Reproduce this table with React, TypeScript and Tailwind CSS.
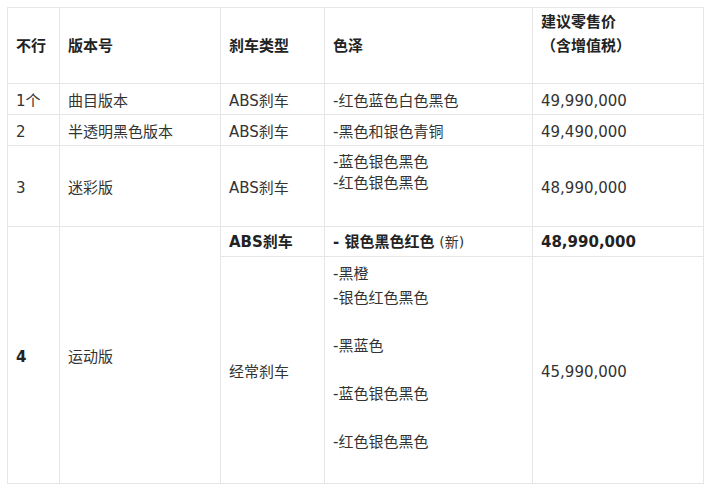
import React from 'react';

const FONT = '"DejaVu Sans", "Noto Sans CJK SC", sans-serif';

const cell = 'border border-[#e6e6e6] px-2 align-middle';
// body rows sit a couple of pixels low in the original
const body = `${cell} pt-1`;

export default function App() {
  return (
    <div className="min-h-[495px] w-[715px] bg-white pl-[7px] pt-[7px] text-[15px] leading-6 text-[#333]" style={{ fontFamily: FONT }}>
      <table className="table-fixed border-collapse">
        <colgroup>
          <col className="w-[52px]" />
          <col className="w-[161px]" />
          <col className="w-[104px]" />
          <col className="w-[208px]" />
          <col className="w-[171px]" />
        </colgroup>
        <tbody>
          <tr className="h-[76px] font-bold text-[#222]">
            <td className={cell}>不行</td>
            <td className={cell}>版本号</td>
            <td className={cell}>刹车类型</td>
            <td className={cell}>色泽</td>
            <td className={cell}>
              <div>建议零售价</div>
              <div>（含增值税）</div>
              <div>&nbsp;</div>
            </td>
          </tr>
          <tr className="h-[31px]">
            <td className={body}>1个</td>
            <td className={body}>曲目版本</td>
            <td className={body}>ABS刹车</td>
            <td className={body}>-红色蓝色白色黑色</td>
            <td className={body}>49,990,000</td>
          </tr>
          <tr className="h-[31px]">
            <td className={body}>2</td>
            <td className={body}>半透明黑色版本</td>
            <td className={body}>ABS刹车</td>
            <td className={body}>-黑色和银色青铜</td>
            <td className={body}>49,490,000</td>
          </tr>
          <tr className="h-[81px]">
            <td className={body}>3</td>
            <td className={body}>迷彩版</td>
            <td className={body}>ABS刹车</td>
            <td className={body}>
              <div className="pb-[30px] leading-[21px]">
                <div>-蓝色银色黑色</div>
                <div>-红色银色黑色</div>
              </div>
            </td>
            <td className={body}>48,990,000</td>
          </tr>
          <tr className="h-[30px]">
            <td className={`${body} font-bold text-[#222]`} rowSpan={2}>4</td>
            <td className={body} rowSpan={2}>运动版</td>
            <td className={`${cell} font-bold text-[#222]`}>ABS刹车</td>
            <td className={cell}>
              <span className="font-bold text-[#222]">- 银色黑色红色</span>{' '}
              <span className="text-[14px]">(新)</span>
            </td>
            <td className={`${cell} font-bold text-[#222]`}>48,990,000</td>
          </tr>
          <tr className="h-[227px]">
            <td className={body}>经常刹车</td>
            <td className={cell}>
              <div>-黑橙</div>
              <div>-银色红色黑色</div>
              <div>&nbsp;</div>
              <div>-黑蓝色</div>
              <div>&nbsp;</div>
              <div>-蓝色银色黑色</div>
              <div>&nbsp;</div>
              <div>-红色银色黑色</div>
              <div>&nbsp;</div>
            </td>
            <td className={body}>45,990,000</td>
          </tr>
        </tbody>
      </table>
    </div>
  );
}
